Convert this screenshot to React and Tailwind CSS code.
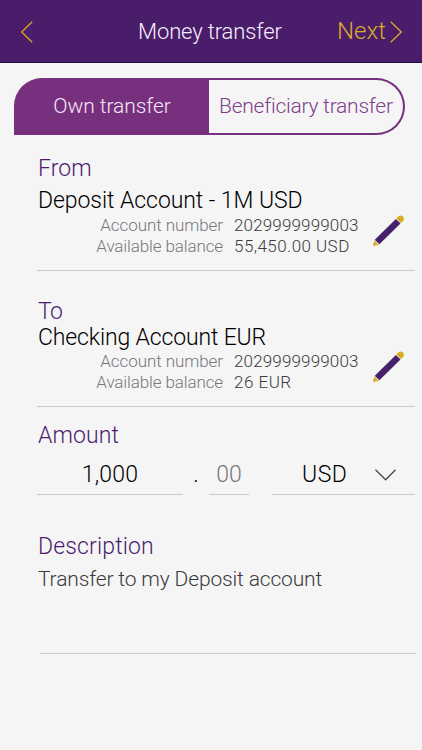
import React from 'react';

function Pencil() {
  return (
    <svg width="34" height="34" viewBox="0 0 34 34" className="block">
      <g transform="translate(0.8 33.2) rotate(-44.5)">
        <path d="M0.3 0 L5.2 -3.2 V3.2 Z" fill="#d3af1c" />
        <rect x="6" y="-3.3" width="29.6" height="6.6" fill="#46206a" />
        <path d="M36.3 -3.3 H38.9 A3.3 3.3 0 0 1 38.9 3.3 H36.3 Z" fill="#d3af1c" />
      </g>
    </svg>
  );
}

function Account({ title, titleClass, name, nameClass, rowsClass, balance, balanceClass }) {
  return (
    <section className="ml-[37px] mr-[7px] border-b border-[#c9c9cb]">
      <h2 className={`pl-px text-[23px] leading-6 text-[#4c1d6e] ${titleClass}`}>{title}</h2>
      <p className={`pl-px text-[23px] leading-6 text-black ${nameClass}`}>{name}</p>
      <div className={`flex ${rowsClass}`}>
        <dl className="grid w-[322px] grid-cols-[186px_1fr] content-start gap-x-[11px] gap-y-px text-[17px] leading-5 whitespace-nowrap text-[#3a3a3c]">
          <dt className="text-right tracking-[-0.07px] text-[#77777b]">Account number</dt>
          <dd className="tracking-[0.15px]">2029999999003</dd>
          <dt className="text-right tracking-[-0.12px] text-[#77777b]">Available balance</dt>
          <dd className={balanceClass}>{balance}</dd>
        </dl>
        <button className="-mt-[2px] ml-[13px] h-[34px] w-[34px]" aria-label="Edit"><Pencil /></button>
      </div>
    </section>
  );
}

export default function App() {
  return (
    <main className="h-[750px] w-[422px] overflow-hidden bg-[#f5f5f5] font-['Roboto','Liberation_Sans',sans-serif] font-light">
      <header className="grid h-[63px] grid-cols-[138px_1fr_87px] items-center border-b border-[#1e0a3c] bg-[#4a1d6b]">
        <svg width="14" height="24" viewBox="0 0 14 24" className="mt-[2px] ml-[20px]" fill="none" stroke="#dca72c" strokeWidth="1.3">
          <path d="M12.2 1.7 L1.7 12 L12.2 22.3" />
        </svg>
        <h1 className="pt-px text-[22px] leading-6 tracking-[-0.12px] text-[#f6effa]">Money transfer</h1>
        <div className="flex items-center pt-[2px] text-[#dbaa2a]">
          <span className="w-[52px] pb-[2px] pl-[2px] text-[24px] leading-6">Next</span>
          <svg width="14" height="24" viewBox="0 0 14 24" className="ml-[2px]" fill="none" stroke="currentColor" strokeWidth="1.3">
            <path d="M1.7 1.7 L12.3 12 L1.7 22.3" />
          </svg>
        </div>
      </header>

      <nav className="mt-[15px] ml-[14px] flex h-[57px] w-[391px] text-[21px] leading-[56px] whitespace-nowrap">
        <div className="w-[195px] rounded-tl-[28px] bg-[#76307d] pl-px text-center tracking-[-0.06px] text-[#f6e8f8]">Own transfer</div>
        <div className="flex-1 rounded-r-[28.5px] border-y-2 border-r-2 border-[#76307d] pl-[10px] leading-[52px] tracking-[-0.24px] text-[#7f3e8c]">Beneficiary transfer</div>
      </nav>

      <div className="pt-[22px]">
        <Account
          title="From"
          titleClass="tracking-[0.1px]"
          name="Deposit Account - 1M USD"
          nameClass="mt-2 tracking-[-0.06px]"
          rowsClass="mt-[2px] h-[55px]"
          balance="55,450.00 USD"
          balanceClass="tracking-[0.45px]"
        />
      </div>
      <div className="pt-[29px]">
        <Account
          title="To"
          titleClass="tracking-[-0.6px]"
          name="Checking Account EUR"
          nameClass="mt-[2px] tracking-[-0.14px]"
          rowsClass="mt-[1px] h-[55px]"
          balance="26 EUR"
          balanceClass="tracking-[0.5px]"
        />
      </div>

      <section className="mr-[7px] ml-[37px] pt-[17px]">
        <h2 className="pl-px text-[23px] leading-6 tracking-[0.11px] text-[#4c1d6e]">Amount</h2>
        <div className="mt-[15px] flex text-[23px] leading-6 text-black">
          <div className="h-[32px] w-[146px] border-b border-[#c9c9cb] text-center tracking-[0.2px]">1,000</div>
          <div className="w-[26px] text-center">.</div>
          <div className="h-[32px] w-[40px] border-b border-[#c9c9cb] text-center text-[#77777b]">00</div>
          <div className="ml-[23px] flex h-[32px] flex-1 border-b border-[#c9c9cb] pl-[30px]">
            <span className="w-[73px] tracking-[0.5px]">USD</span>
            <svg width="22" height="14" viewBox="0 0 22 14" className="mt-[5px]" fill="none" stroke="#4a4a4c" strokeWidth="1.3">
              <path d="M0.5 1.7 L10.7 11.8 L20.5 1.7" />
            </svg>
          </div>
        </div>
      </section>

      <section className="mr-[6px] ml-[38px] pt-[40px]">
        <h2 className="text-[23px] leading-6 tracking-[0.15px] text-[#4c1d6e]">Description</h2>
        <p className="mt-2 ml-[2px] h-[87px] border-b border-[#c9c9cb] text-[21px] leading-6 tracking-[-0.15px] text-[#3a3a3c]">
          <span className="-ml-[2px]">Transfer to my Deposit account</span>
        </p>
      </section>
    </main>
  );
}
